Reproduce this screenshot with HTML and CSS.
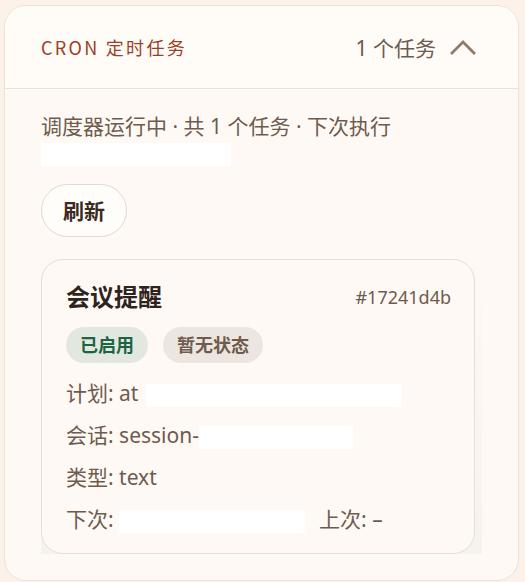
FILE: index.html
```html
<!DOCTYPE html>
<html lang="zh-CN">
<head>
  <meta charset="UTF-8">
  <title>Cron 定时任务</title>
  <meta name="viewport" content="width=device-width, initial-scale=1.0">
  <link rel="stylesheet" href="styles.css">
</head>
<body>

  <div class="panel">
    <div class="panel-head">
      <span class="panel-title">CRON 定时任务</span>
      <div class="panel-meta">
        <span>1 个任务</span>
        <svg class="chevron" width="26" height="16" viewBox="0 0 26 16">
          <path d="M2 14 L13 3 L24 14" fill="none" stroke="#8e7b6c" stroke-width="2.8" stroke-linecap="square"/>
        </svg>
      </div>
    </div>

    <div class="panel-body">
      <p class="summary">调度器运行中 · 共 1 个任务 · 下次执行<br><span class="blank" style="width:190px"></span></p>

      <button class="btn-refresh">刷新</button>

      <div class="task-list">
        <div class="task-card">
          <div class="task-head">
            <h2>会议提醒</h2>
            <span class="task-id">#17241d4b</span>
          </div>
          <div class="badges">
            <span class="badge on">已启用</span>
            <span class="badge muted">暂无状态</span>
          </div>
          <div class="details">
            <div>计划: at <span class="blank gap" style="width:256px"></span></div>
            <div>会话: session-<span class="blank" style="width:154px"></span></div>
            <div>类型: text</div>
            <div>下次: <span class="blank" style="width:186px"></span><span class="last">上次: –</span></div>
          </div>
        </div>
      </div>
    </div>
  </div>

</body>
</html>
```

FILE: styles.css
```css
body {
  margin: 0;
  padding: 5px 6px 0 4px;
  background-color: #fcf2e9;
  font-family: "Noto Sans", "Noto Sans CJK SC", sans-serif;
  color: #6e5b4e;
}

.panel {
  height: 576px;
  background: #fef9f4;
  border: 1px solid #ebe1d7;
  border-radius: 22px;
  box-sizing: border-box;
  overflow: hidden;
}

.panel-head {
  height: 83px;
  display: flex;
  align-items: center;
  justify-content: space-between;
  padding: 0 42px 0 36px;
  background: #fffcf7;
  border-bottom: 1px solid #ebe1d7;
  box-sizing: border-box;
}

.panel-title {
  font-family: "Noto Sans CJK SC", sans-serif;
  font-size: 18px;
  letter-spacing: 2.3px;
  color: #9c3f26;
}

.panel-meta {
  display: flex;
  align-items: center;
  gap: 14px;
  font-size: 21px;
  color: #6b5a4d;
}

.chevron {
  display: block;
  margin-top: -1px;
}

.panel-body {
  padding: 24px 36px 0 36px;
}

.summary {
  margin: 0;
  font-size: 21px;
  line-height: 26px;
}

.blank {
  display: inline-block;
  height: 23px;
  background: #ffffff;
  vertical-align: middle;
}

.blank.gap {
  margin-left: 2px;
}

.btn-refresh {
  display: block;
  margin-top: 18px;
  height: 53px;
  padding: 0 21px;
  background: #fffdfa;
  border: 1px solid #e4d9d0;
  border-radius: 27px;
  font-family: inherit;
  font-size: 21px;
  font-weight: bold;
  color: #3a2b23;
  cursor: pointer;
}

.task-list {
  margin-top: 22px;
  padding-right: 7px;
  background: linear-gradient(to bottom, rgba(246,242,237,0) 0%, #f6f2ed 100%);
}

.task-card {
  background: #fef9f4;
  border: 1px solid #e6ddd5;
  border-radius: 22px;
  padding: 22px 23px 19px 24px;
}

.task-head {
  display: flex;
  align-items: center;
  justify-content: space-between;
}

.task-head h2 {
  margin: 0;
  font-size: 24px;
  line-height: 30px;
  font-weight: bold;
  color: #2e231d;
}

.task-id {
  font-size: 18px;
  color: #6e5b4e;
}

.badges {
  display: flex;
  gap: 15px;
  margin-top: 15px;
}

.badge {
  height: 36px;
  line-height: 36px;
  padding: 0 14px;
  border-radius: 18px;
  font-size: 18px;
  font-weight: bold;
}

.badge.on {
  background: #e2e8df;
  color: #1d6445;
}

.badge.muted {
  background: #ede6e0;
  color: #6e5b4e;
}

.details {
  display: flex;
  flex-direction: column;
  gap: 12px;
  margin-top: 15px;
  font-size: 21px;
  line-height: 30px;
}

.last {
  margin-left: 14px;
}
```
